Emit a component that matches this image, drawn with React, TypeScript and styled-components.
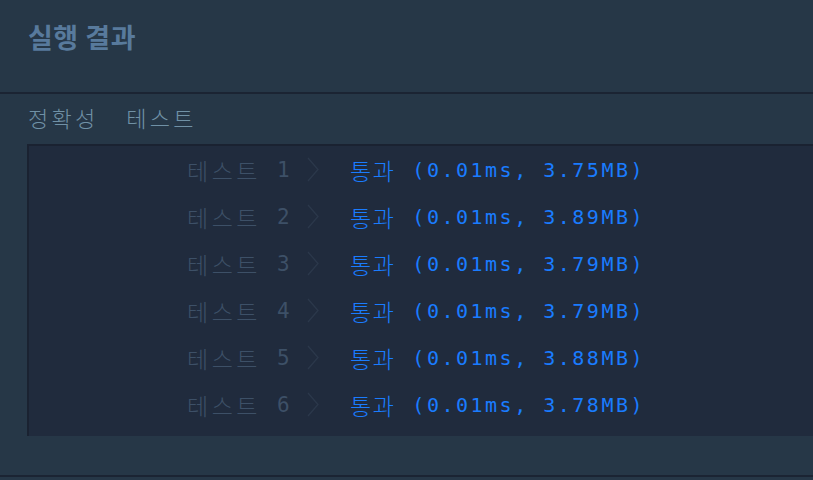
import React from "react";
import styled, { createGlobalStyle } from "styled-components";

const GlobalStyle = createGlobalStyle`
    html, body {
        margin: 0;
        padding: 0;
        background: #263747;
    }
    body {
        font-family: "Noto Sans CJK KR", "Noto Sans", sans-serif;
    }
`;

const Panel = styled.div`
    width: 813px;
    height: 480px;
    overflow: hidden;
    background: #263747;
    display: flex;
    flex-direction: column;
`;

/* 상단 제목 영역 */
const Header = styled.div`
    height: 94px;
    box-sizing: border-box;
    padding: 18px 0 0 28px;
    border-bottom: 2px solid #1b2433;
`;

const Title = styled.h2`
    margin: 0;
    font-size: 27px;
    font-weight: 700;
    line-height: 38px;
    color: #587a9c;
    letter-spacing: 0.5px;
`;

const Tabs = styled.div`
    display: flex;
    gap: 28px;
    padding: 7px 0 0 28px;
    height: 31px;
    align-items: center;
`;

const Tab = styled.span`
    font-size: 22px;
    font-weight: 300;
    letter-spacing: 3.2px;
    line-height: 1;
    color: #7091a6;
`;

/* 결과 출력 박스 */
const Output = styled.div`
    margin: 12px 0 0 27px;
    height: 292px;
    box-sizing: border-box;
    background: #202b3d;
    border-top: 2px solid #1a2231;
    border-left: 2px solid #1a2231;
`;

const Row = styled.div`
    display: flex;
    align-items: center;
    height: 47px;
    padding-left: 158px;
`;

const Label = styled.span`
    display: flex;
    align-items: center;
    width: 120px;
    font-size: 23px;
    font-weight: 300;
    letter-spacing: 3.5px;
    color: #3d5067;
    white-space: nowrap;
`;

const Num = styled.span`
    margin-left: 16px;
    font-family: "DejaVu Sans Mono", monospace;
    font-size: 21px;
    letter-spacing: 0;
`;

const Chevron = styled.svg`
    width: 12px;
    height: 25px;
    margin-right: 31px;
    flex-shrink: 0;
`;

const Pass = styled.span<{ $ok: boolean }>`
    font-size: 23px;
    font-weight: 300;
    letter-spacing: 1.5px;
    margin-right: 17px;
    color: ${(p) => (p.$ok ? "#1a7cff" : "#e5534b")};
`;

const Detail = styled.span`
    font-family: "DejaVu Sans Mono", monospace;
    font-size: 20px;
    letter-spacing: 2.5px;
    color: #1a7cff;
    white-space: pre;
`;

const Footer = styled.div`
    margin-top: 39px;
    border-top: 2px solid #1b2433;
    flex: 1;
`;

interface TestResult {
    no: number;
    ms: string;
    mb: string;
}

const results: TestResult[] = [
    { no: 1, ms: "0.01", mb: "3.75" },
    { no: 2, ms: "0.01", mb: "3.89" },
    { no: 3, ms: "0.01", mb: "3.79" },
    { no: 4, ms: "0.01", mb: "3.79" },
    { no: 5, ms: "0.01", mb: "3.88" },
    { no: 6, ms: "0.01", mb: "3.78" },
];

const App: React.FC = () => {
    return (
        <>
            <GlobalStyle />
            <Panel>
                <Header>
                    <Title>실행 결과</Title>
                </Header>
                <Tabs>
                    <Tab>정확성</Tab>
                    <Tab>테스트</Tab>
                </Tabs>
                <Output>
                    {results.map((r) => (
                        <Row key={r.no}>
                            <Label>
                                테스트<Num>{r.no}</Num>
                            </Label>
                            <Chevron viewBox="0 0 12 25">
                                <polyline
                                    points="1,1 11,12.5 1,24"
                                    fill="none"
                                    stroke="#2b384b"
                                    strokeWidth="1.3"
                                />
                            </Chevron>
                            <Pass $ok>통과</Pass>
                            <Detail>({r.ms}ms, {r.mb}MB)</Detail>
                        </Row>
                    ))}
                </Output>
                <Footer />
            </Panel>
        </>
    );
};

export default App;
